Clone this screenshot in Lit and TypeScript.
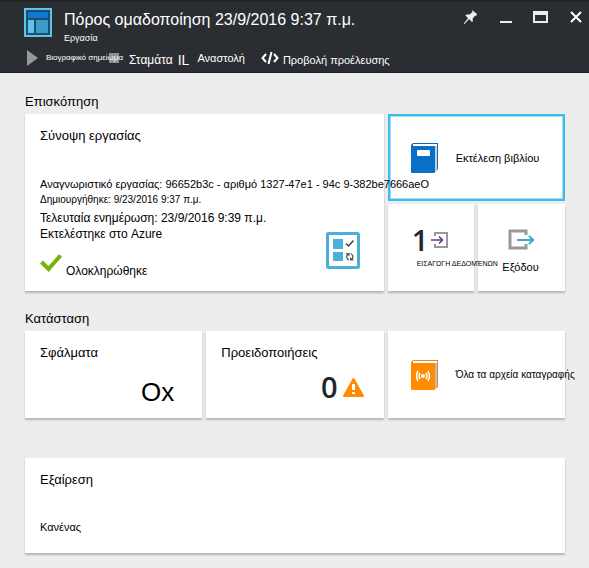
import { LitElement, html, css } from "lit";
import { customElement, property } from "lit/decorators.js";

@customElement("job-tile")
export class JobTile extends LitElement {
  @property({ reflect: true }) layout = "row";
  @property({ type: Boolean, reflect: true }) selected = false;

  static styles = css`
    :host {
      display: block;
      min-width: 0;
    }
    button {
      box-sizing: border-box;
      display: flex;
      width: 100%;
      height: 100%;
      margin: 0;
      padding: 0 0 0 22px;
      border: 0;
      background: #fff;
      color: #000;
      font: inherit;
      text-align: left;
      white-space: nowrap;
      align-items: center;
      gap: 16px;
      box-shadow: 0 2px 2px #b4b4b4;
      cursor: pointer;
    }
    :host([selected]) button {
      box-shadow: inset 0 0 0 2px #39bdec, inset 0 0 0 3px #a5dcf3;
    }
    :host([layout="stack"]) button {
      flex-direction: column;
      align-items: stretch;
      justify-content: flex-start;
      padding: 20px 0 0 24px;
      gap: 0;
    }
    :host([layout="count"]) button {
      flex-direction: column;
      align-items: stretch;
      justify-content: flex-start;
      padding: 12px 20px 0 15px;
      gap: 8px;
    }
  `;

  render() {
    return html`<button type="button"><slot></slot></button>`;
  }
}

@customElement("app-root")
export class AppRoot extends LitElement {
  static styles = css`
    :host {
      display: block;
      min-height: 100vh;
      background: #ededed;
      color: #000;
      font-family: "Liberation Sans", Arial, sans-serif;
      font-size: 12px;
      line-height: 16px;
    }
    svg {
      display: block;
      flex: none;
    }
    h1, h2, h3, p {
      margin: 0;
      font-weight: 400;
    }
    header {
      box-sizing: border-box;
      background: #2a2e32;
      color: #fff;
      border-top: 2px solid #1e2226;
      border-bottom: 1px solid #1e2226;
      padding: 5px 6px 4px 24px;
    }
    header button {
      margin: 0;
      padding: 0;
      border: 0;
      background: none;
      color: inherit;
      font: inherit;
      cursor: pointer;
    }
    .titlebar {
      display: flex;
      align-items: flex-start;
      gap: 12px;
    }
    .resource {
      margin-top: 1px;
    }
    .titles {
      flex: 1;
      min-width: 0;
      white-space: nowrap;
    }
    h1 {
      font-size: 16px;
      line-height: 25px;
    }
    .subtitle {
      font-size: 9px;
      line-height: 12px;
    }
    .window {
      display: flex;
      gap: 20px;
      margin-top: 2px;
    }
    .toolbar {
      display: flex;
      height: 20px;
      margin-top: 4px;
      white-space: nowrap;
    }
    .toolbar button {
      display: flex;
      align-items: center;
      align-self: flex-start;
      line-height: 16px;
      height: 20px;
    }
    .toolbar .low {
      align-items: flex-end;
    }
    .toolbar .low svg {
      align-self: center;
    }
    .resume {
      width: 83px;
      gap: 8px;
      margin-left: 2px;
    }
    .resume span {
      position: relative;
      z-index: 1;
    }
    .tiny {
      font-size: 8px;
    }
    .toolbar .stop {
      gap: 10px;
    }
    .toolbar .pause {
      gap: 8px;
      margin-left: 5px;
    }
    .bars {
      font-size: 14px;
      align-self: flex-end;
    }
    .toolbar .source {
      gap: 4px;
      margin-left: 16px;
    }
    main {
      padding: 20px 24px 14px 25px;
    }
    h2 {
      font-size: 13px;
      line-height: 17px;
      padding-bottom: 4px;
    }
    .grid {
      display: grid;
      grid-template-columns: repeat(6, minmax(0, 1fr));
      grid-auto-rows: 87px;
      gap: 3px 4px;
    }
    section {
      margin-bottom: 19px;
    }
    .wide {
      grid-column: span 2;
    }
    .card {
      background: #fff;
      box-shadow: 0 2px 2px #b4b4b4;
      box-sizing: border-box;
      padding: 12px 15px;
    }
    h3, .label {
      font-size: 13px;
      line-height: 20px;
    }
    .summary {
      grid-column: span 4;
      grid-row: span 2;
      position: relative;
      z-index: 1;
      display: flex;
      justify-content: space-between;
      align-items: flex-end;
      padding: 12px 24px 12px 15px;
      white-space: nowrap;
    }
    .details {
      flex: 1;
      min-width: 0;
      align-self: flex-start;
    }
    .facts {
      padding: 30px 0 12px;
    }
    .small {
      font-size: 11px;
    }
    .note {
      font-size: 10px;
    }
    .later {
      margin-top: 2px;
    }
    .done {
      display: flex;
      align-items: flex-end;
      gap: 4px;
      height: 25px;
    }
    .done svg {
      align-self: flex-start;
    }
    .checklist {
      margin-bottom: 10px;
    }
    .over {
      position: relative;
      z-index: 1;
    }
    .figure {
      display: flex;
      align-items: center;
      gap: 3px;
      height: 32px;
      font-family: "Open Sans", "Noto Sans", sans-serif;
      font-size: 29px;
      font-weight: 600;
      line-height: 32px;
      color: #20262e;
    }
    .figure.end {
      justify-content: flex-end;
      gap: 5px;
    }
    .figure.plain {
      font-family: inherit;
      font-size: 26px;
      font-weight: 400;
      color: #000;
      padding: 5px 8px 0 0;
    }
    .caption {
      font-size: 7px;
      line-height: 16px;
      padding-left: 5px;
    }
    .output {
      line-height: 22px;
    }
    .exception {
      margin-top: 40px;
      padding-bottom: 18px;
    }
    .exception p {
      padding-top: 29px;
    }
  `;

  render() {
    return html`
      <header>
        <div class="titlebar">
          <svg class="resource" width="28" height="29" viewBox="0 0 28 29">
            <rect width="28" height="29" fill="#5fc3ea" />
            <rect x="2" y="2" width="24" height="25" fill="#1d4f6c" />
            <rect x="4" y="4" width="20" height="6" fill="#0f78d4" />
            <rect x="4" y="12" width="6" height="13" fill="#5fc3ea" />
            <rect x="12" y="12" width="12" height="13" fill="#3b9ccb" />
          </svg>
          <div class="titles">
            <h1>Πόρος ομαδοποίηση 23/9/2016 9:37 π.μ.</h1>
            <p class="subtitle">Εργασία</p>
          </div>
          <div class="window">
            <button aria-label="Pin">
              <svg width="16" height="16" viewBox="0 0 16 16" fill="#eee">
                <path d="M9 1l5 4-1 2-1-.3-2.500 3L10 12l-1 1-3-3-4.500 5H1v-.8L5 9 2.500 6.500l1-1 3 .1 3-2.600z" />
              </svg>
            </button>
            <button aria-label="Minimize">
              <svg width="14" height="16" viewBox="0 0 14 16"><rect x="1" y="12" width="12" height="2" fill="#eee" /></svg>
            </button>
            <button aria-label="Maximize">
              <svg width="16" height="16" viewBox="0 0 16 16"><path d="M0 2h15v12H0zM2 6v6h11V6z" fill="#eee" fill-rule="evenodd" /></svg>
            </button>
            <button aria-label="Close">
              <svg width="14" height="16" viewBox="0 0 14 16"><path d="M2 3l10 10M12 3L2 13" stroke="#fff" stroke-width="2" /></svg>
            </button>
          </div>
        </div>
        <div class="toolbar">
          <button class="resume">
            <svg width="12" height="16" viewBox="0 0 12 16"><path d="M1 0l11 8L1 16z" fill="#96989a" /></svg>
            <span class="tiny">Βιογραφικό σημείωμα</span>
          </button>
          <button class="stop low">
            <svg width="10" height="10" viewBox="0 0 10 10"><rect width="10" height="10" fill="#8e9092" /></svg>
            <span>Σταμάτα</span>
          </button>
          <button class="pause"><span class="bars">IL</span><span class="small">Αναστολή</span></button>
          <button class="source low">
            <svg width="18" height="14" viewBox="0 0 18 14" fill="none" stroke="#fff" stroke-width="2">
              <path d="M5 3L1.500 7 5 11M13 3l3.500 4L13 11M10.500 1l-3 12" />
            </svg>
            <span class="small">Προβολή προέλευσης</span>
          </button>
        </div>
      </header>

      <main>
        <section>
          <h2>Επισκόπηση</h2>
          <div class="grid">
            <article class="card summary">
              <div class="details">
                <h3>Σύνοψη εργασίας</h3>
                <div class="facts">
                  <p class="small">Αναγνωριστικό εργασίας: 96652b3c - αριθμό 1327-47e1 - 94c 9-382be7666aeO</p>
                  <p class="note">Δημιουργήθηκε: 9/23/2016 9:37 π.μ.</p>
                  <p class="later">Τελευταία ενημέρωση: 23/9/2016 9:39 π.μ.</p>
                  <p>Εκτελέστηκε στο Azure</p>
                </div>
                <div class="done">
                  <svg width="22" height="18" viewBox="0 0 22 18"><path d="M1.500 8l7 7L20.500 1.500" fill="none" stroke="#76b20a" stroke-width="4" /></svg>
                  <span>Ολοκληρώθηκε</span>
                </div>
              </div>
              <svg class="checklist" width="34" height="37" viewBox="0 0 34 37">
                <rect x="1.500" y="1.500" width="31" height="34" rx="1" fill="#fff" stroke="#4ab0da" stroke-width="3" />
                <rect x="7" y="7" width="10" height="10" fill="#4ab0da" />
                <rect x="7" y="20" width="10" height="9" fill="#4ab0da" />
                <path d="M20 11.500l2.500 2.500 5-5.500" fill="none" stroke="#444" stroke-width="1.500" />
                <path d="M23 28a3.500 3.500 0 0 1-1-6M24.500 21.500a3.500 3.500 0 0 1 1 6" fill="none" stroke="#555" stroke-width="1.300" />
                <path d="M19.500 21h4v3.500zM28 28.500h-4V25z" fill="#555" />
              </svg>
            </article>

            <job-tile class="wide" selected>
              <svg width="30" height="32" viewBox="0 0 30 32">
                <path d="M3 1h25v26l-3 3V5H1V3z" fill="#1467b3" />
                <path d="M3 2h24v2H3z" fill="#fff" />
                <path d="M25 4h2v24l-2 2z" fill="#cfcfd6" />
                <rect x="1" y="4" width="24" height="27" rx="1" fill="#0a6fc9" />
                <rect x="7" y="8" width="13" height="6" rx="1" fill="#fff" />
              </svg>
              <span class="small">Εκτέλεση βιβλίου</span>
            </job-tile>

            <job-tile class="over" layout="stack">
              <div class="figure">
                <span>1</span>
                <svg width="18" height="16" viewBox="0 0 18 16" fill="none">
                  <path d="M4 4V1h12v14H4v-3" stroke="#999" stroke-width="2" />
                  <path d="M0 8h11M8 4.500L11.500 8 8 11.500" stroke="#68368c" stroke-width="1.500" />
                </svg>
              </div>
              <span class="caption">ΕΙΣΑΓΩΓΗ ΔΕΔΟΜΈΝΩΝ</span>
            </job-tile>

            <job-tile layout="stack">
              <div class="figure">
                <svg width="34" height="22" viewBox="0 0 34 22" fill="none">
                  <path d="M24 6V2H8v17h16v-4" stroke="#999" stroke-width="3" />
                  <path d="M15 11h17M27 7l4 4-4 4" stroke="#3fa4d4" stroke-width="2" />
                </svg>
              </div>
              <span class="small output">Εξόδου</span>
            </job-tile>
          </div>
        </section>

        <section>
          <h2>Κατάσταση</h2>
          <div class="grid">
            <job-tile class="wide" layout="count">
              <span class="label">Σφάλματα</span>
              <div class="figure end plain"><span>Ox</span></div>
            </job-tile>
            <job-tile class="wide" layout="count">
              <span class="label">Προειδοποιήσεις</span>
              <div class="figure end">
                <span>0</span>
                <svg width="21" height="19" viewBox="0 0 21 19">
                  <path d="M10.500 1L20 18H1z" fill="#ff8c00" stroke="#ff8c00" stroke-width="2" stroke-linejoin="round" />
                  <path d="M9 6h3v6H9zM9 14h3v2H9z" fill="#fff" />
                </svg>
              </div>
            </job-tile>
            <job-tile class="wide">
              <svg width="30" height="32" viewBox="0 0 30 32">
                <path d="M3 1h25v27l-3 2V5H1V3z" fill="#f58220" />
                <path d="M3 2h24v2H3z" fill="#fff" />
                <path d="M25 4h2v23l-2 3z" fill="#b9bdc9" />
                <rect x="1" y="4" width="24" height="27" rx="1" fill="#ff8c00" />
                <circle cx="13" cy="17" r="2" fill="#fff" />
                <path d="M10 14q-2 3 0 6M16 14q2 3 0 6M8 12q-3 5 0 10M18 12q3 5 0 10" fill="none" stroke="#fff" stroke-width="1.500" />
              </svg>
              <span class="note">Όλα τα αρχεία καταγραφής</span>
            </job-tile>
          </div>
          <article class="card exception">
            <h3>Εξαίρεση</h3>
            <p class="small">Κανένας</p>
          </article>
        </section>
      </main>
    `;
  }
}
